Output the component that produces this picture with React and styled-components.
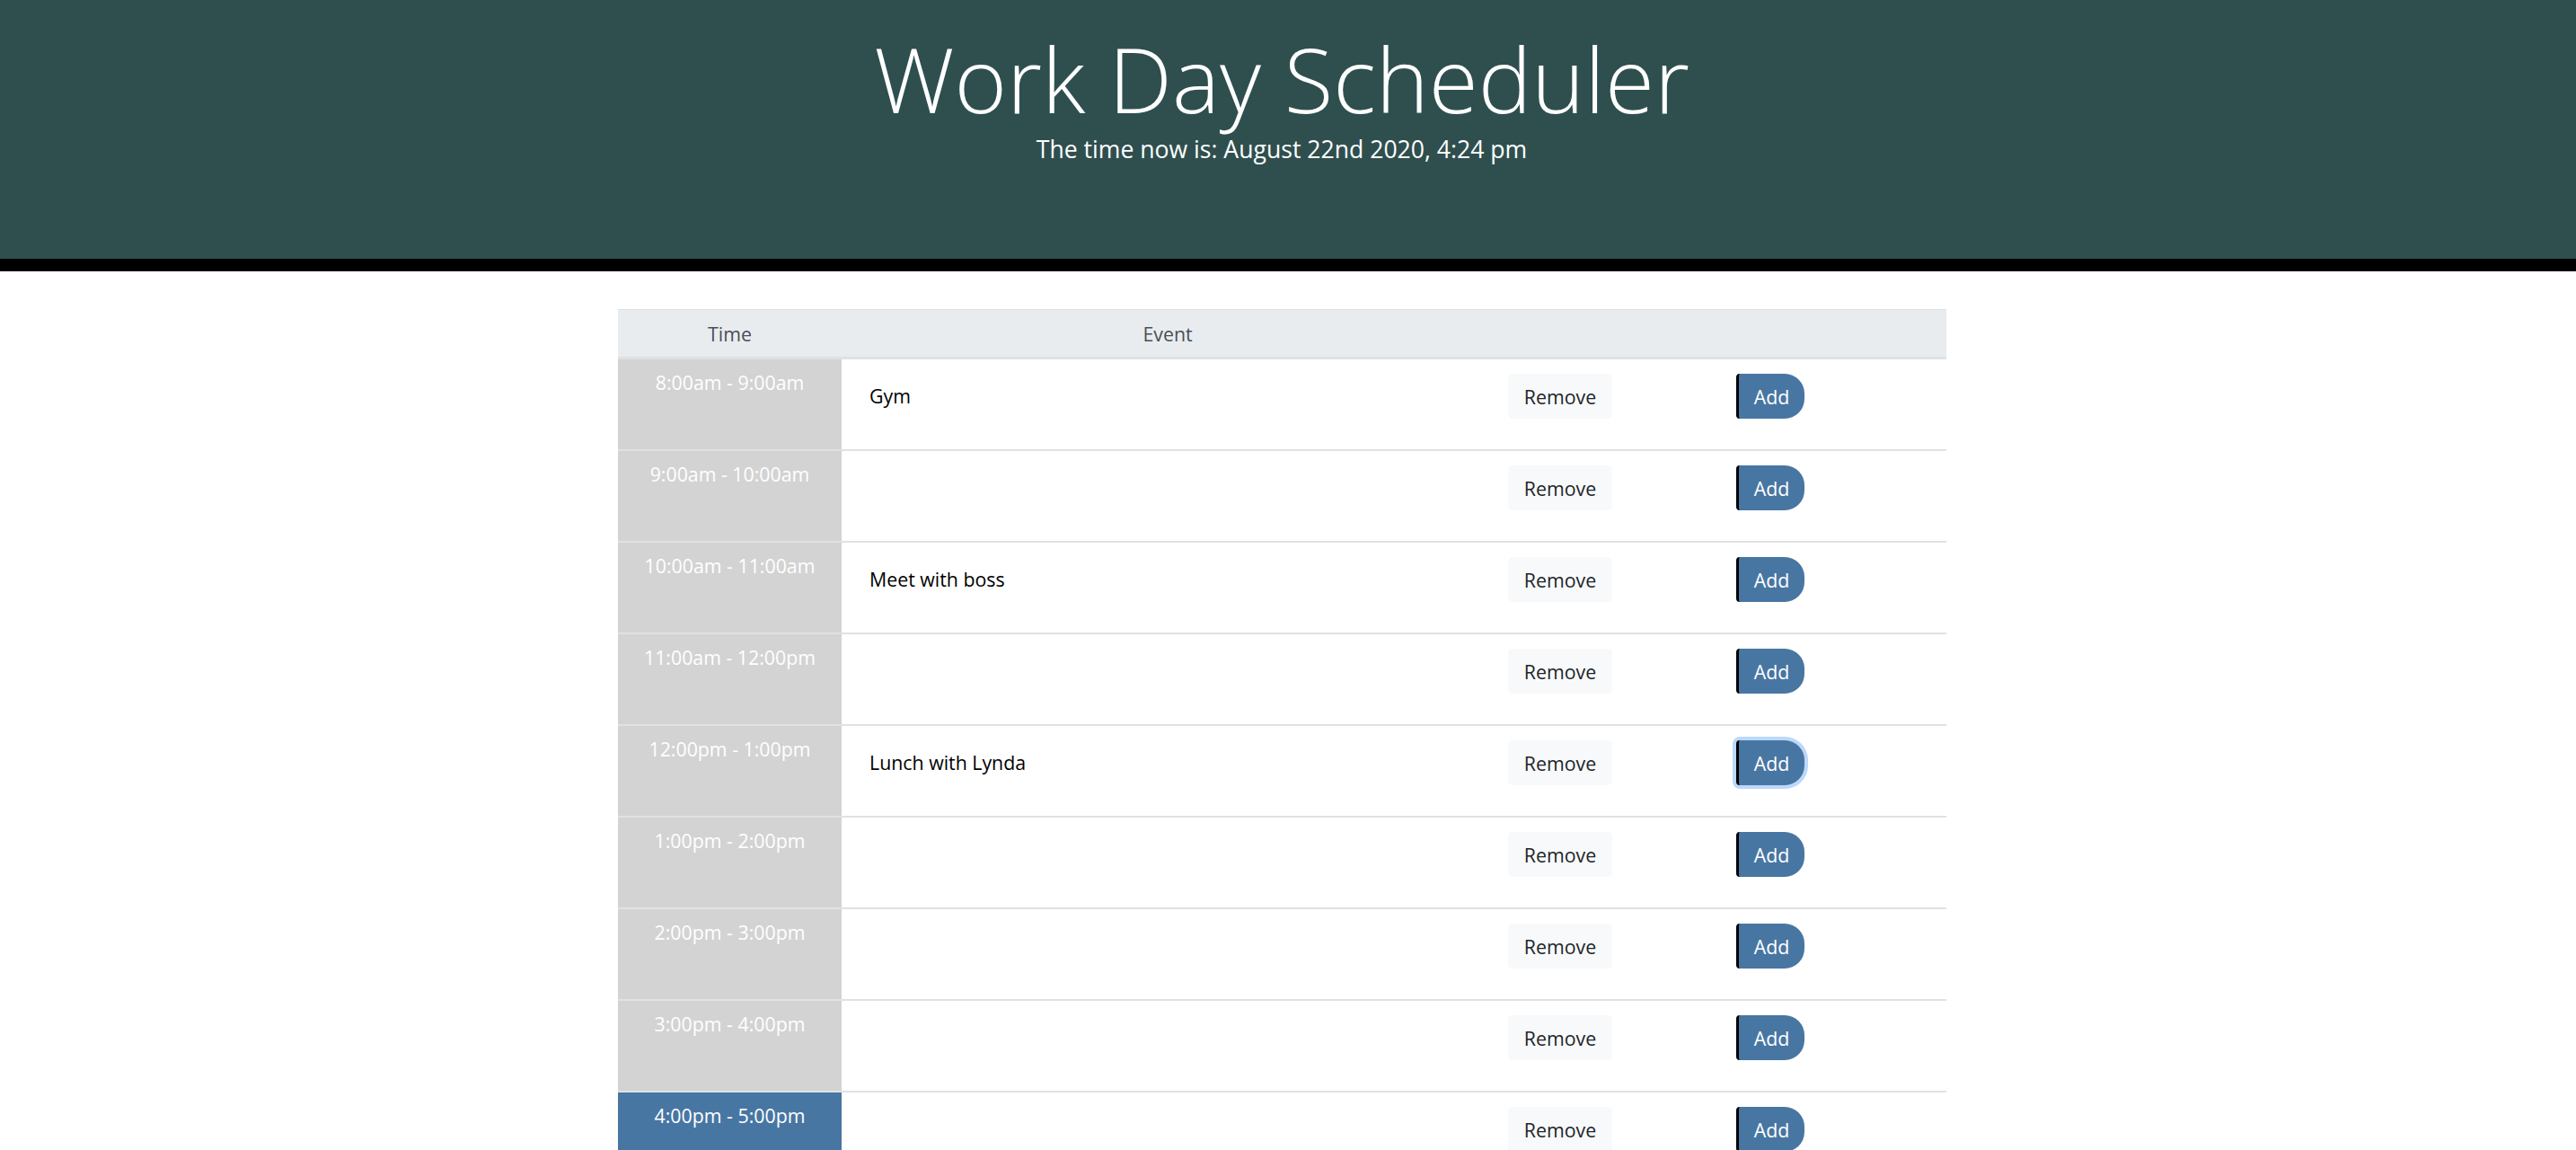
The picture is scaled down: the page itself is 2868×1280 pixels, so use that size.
import React from 'react';
import styled, { createGlobalStyle, css } from 'styled-components';

const GlobalStyle = createGlobalStyle`
  body {
    margin: 0;
    background: #ffffff;
    font-family: "Open Sans", "Liberation Sans", sans-serif;
    font-size: 21.33px;
    line-height: 1.5;
    color: #212529;
  }
`;

const Jumbotron = styled.header`
  height: 288px;
  padding-right: 14px;
  background-color: #2f4f4f;
  border-bottom: 14px solid #000000;
  text-align: center;
  color: #ffffff;
  overflow: hidden;
`;

const Title = styled.h1`
  margin: 0;
  padding-top: 27px;
  font-size: 100px;
  font-weight: 350;
  line-height: 1.2;
`;

const Lead = styled.p`
  margin: 0;
  font-size: 26.6px;
  font-weight: 400;
  line-height: 1.5;
`;

const Main = styled.main`
  padding-right: 13px;
`;

const Schedule = styled.div`
  width: 1479px;
  margin: 42px auto 0;
`;

const columns = css`
  display: grid;
  grid-template-columns: 249px 726px 254px 250px;
`;

const HeadRow = styled.div`
  ${columns};
  background-color: #e9ecef;
  border-top: 1px solid #dee2e6;
  border-bottom: 3px solid #dee2e6;
  color: #495057;
`;

const HeadCell = styled.div`
  padding: 11px 0 9px;
  text-align: center;
  line-height: 32px;
`;

const Row = styled.div`
  ${columns};
  height: 100px;
  border-bottom: 2px solid #dee2e6;
`;

const stateColors = {
  past: '#d3d3d3',
  present: '#4876a3',
  future: '#77dd77',
};

const Hour = styled.div`
  padding-top: 10px;
  text-align: center;
  line-height: 32px;
  color: #ffffff;
  background-color: ${(p) => stateColors[p.$state]};
`;

const EventText = styled.div`
  padding: 16px 16px 0 31px;
  line-height: 50px;
  color: #000000;
`;

const ActionCell = styled.div`
  padding: 16px 0 0 16px;
`;

const RemoveButton = styled.button`
  width: 116px;
  height: 50px;
  padding: 0;
  border: none;
  border-radius: 5px;
  background-color: #f8f9fa;
  color: #212529;
  font-family: inherit;
  font-size: 21.33px;
  cursor: pointer;
`;

const AddButton = styled.button`
  width: 76px;
  height: 50px;
  padding: 0;
  border: none;
  border-left: 3px solid #000000;
  border-radius: 4px 22px 22px 4px;
  background-color: #4876a3;
  color: #ffffff;
  font-family: inherit;
  font-size: 21.33px;
  cursor: pointer;
  box-shadow: ${(p) => (p.$focused ? '0 0 0 4px #bcd8fa' : 'none')};
`;

const hours = [
  { label: '8:00am - 9:00am', event: 'Gym', state: 'past' },
  { label: '9:00am - 10:00am', event: '', state: 'past' },
  { label: '10:00am - 11:00am', event: 'Meet with boss', state: 'past' },
  { label: '11:00am - 12:00pm', event: '', state: 'past' },
  { label: '12:00pm - 1:00pm', event: 'Lunch with Lynda', state: 'past', focused: true },
  { label: '1:00pm - 2:00pm', event: '', state: 'past' },
  { label: '2:00pm - 3:00pm', event: '', state: 'past' },
  { label: '3:00pm - 4:00pm', event: '', state: 'past' },
  { label: '4:00pm - 5:00pm', event: '', state: 'present' },
  { label: '5:00pm - 6:00pm', event: '', state: 'future' },
];

function App() {
  return (
    <>
      <GlobalStyle />
      <Jumbotron>
        <Title>Work Day Scheduler</Title>
        <Lead>The time now is: August 22nd 2020, 4:24 pm</Lead>
      </Jumbotron>
      <Main>
        <Schedule>
          <HeadRow>
            <HeadCell>Time</HeadCell>
            <HeadCell>Event</HeadCell>
            <HeadCell />
            <HeadCell />
          </HeadRow>
          {hours.map((h) => (
            <Row key={h.label}>
              <Hour $state={h.state}>{h.label}</Hour>
              <EventText>{h.event}</EventText>
              <ActionCell>
                <RemoveButton>Remove</RemoveButton>
              </ActionCell>
              <ActionCell>
                <AddButton $focused={h.focused}>Add</AddButton>
              </ActionCell>
            </Row>
          ))}
        </Schedule>
      </Main>
    </>
  );
}

export default App;
